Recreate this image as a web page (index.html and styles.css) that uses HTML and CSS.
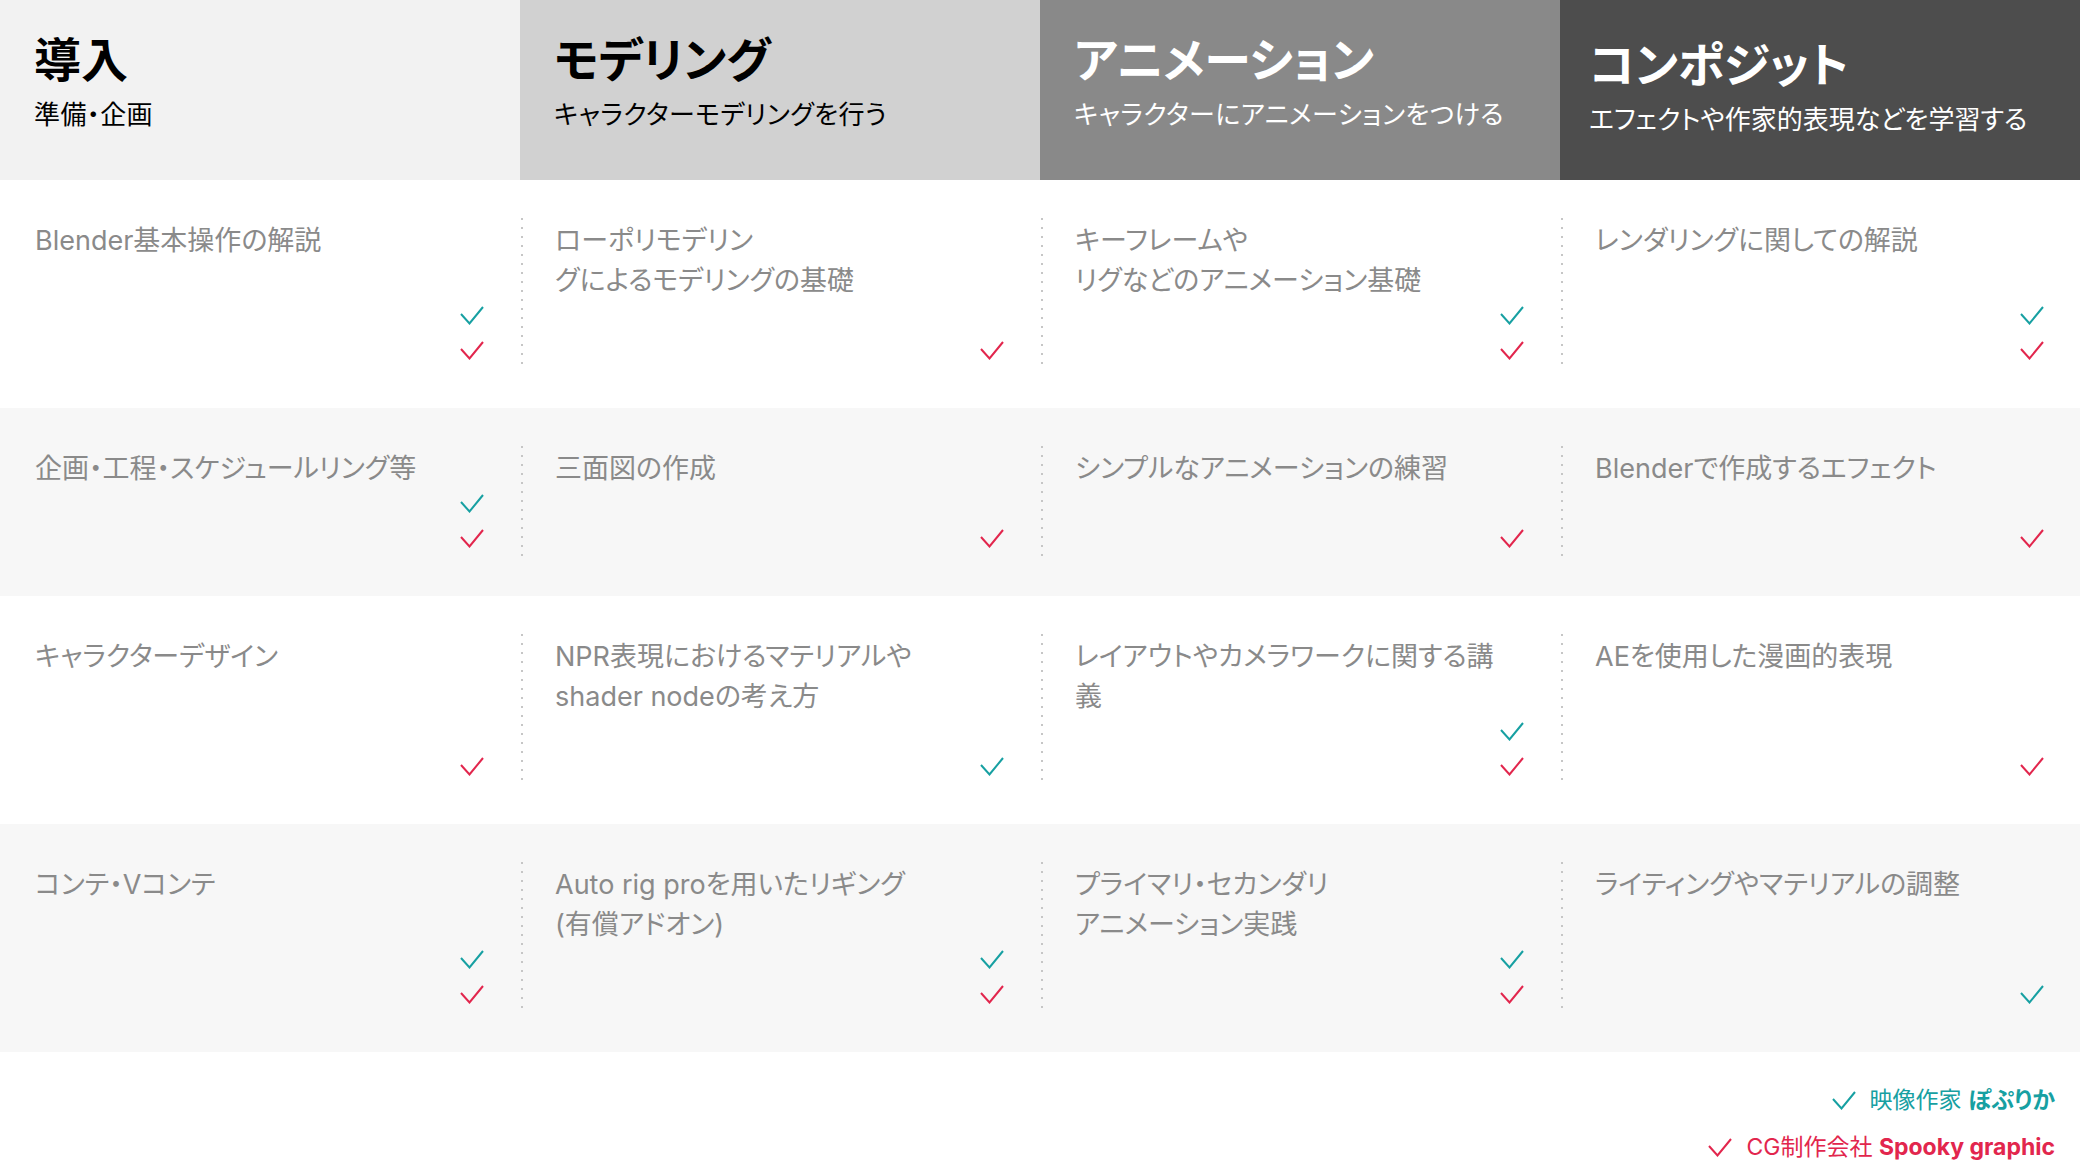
FILE: index.html
```html
<!DOCTYPE html>
<html lang="ja">
<head>
  <meta charset="UTF-8">
  <meta name="viewport" content="width=device-width, initial-scale=1.0">
  <title>カリキュラム</title>
  <link rel="stylesheet" href="styles.css">
</head>
<body>
  <svg width="0" height="0" class="defs">
    <symbol id="check" viewBox="0 0 24 19">
      <polyline points="1,8 9.5,17.5 23,1" fill="none" stroke="currentColor" stroke-width="2"/>
    </symbol>
  </svg>

  <section class="curriculum">
    <header class="heads">
      <div class="head head-1">
        <h2>導入</h2>
        <p>準備・企画</p>
      </div>
      <div class="head head-2">
        <h2>モデリング</h2>
        <p>キャラクターモデリングを行う</p>
      </div>
      <div class="head head-3">
        <h2>アニメーション</h2>
        <p>キャラクターにアニメーションをつける</p>
      </div>
      <div class="head head-4">
        <h2>コンポジット</h2>
        <p>エフェクトや作家的表現などを学習する</p>
      </div>
    </header>

    <div class="row">
      <div class="cell">
        <p class="topic">Blender基本操作の解説</p>
        <div class="marks"><svg class="mark teal"><use href="#check"/></svg><svg class="mark red"><use href="#check"/></svg></div>
      </div>
      <div class="cell">
        <p class="topic">ローポリモデリン<br>グによるモデリングの基礎</p>
        <div class="marks"><svg class="mark red"><use href="#check"/></svg></div>
      </div>
      <div class="cell">
        <p class="topic">キーフレームや<br>リグなどのアニメーション基礎</p>
        <div class="marks"><svg class="mark teal"><use href="#check"/></svg><svg class="mark red"><use href="#check"/></svg></div>
      </div>
      <div class="cell">
        <p class="topic">レンダリングに関しての解説</p>
        <div class="marks"><svg class="mark teal"><use href="#check"/></svg><svg class="mark red"><use href="#check"/></svg></div>
      </div>
    </div>

    <div class="row row-alt">
      <div class="cell">
        <p class="topic">企画・工程・スケジュールリング等</p>
        <div class="marks"><svg class="mark teal"><use href="#check"/></svg><svg class="mark red"><use href="#check"/></svg></div>
      </div>
      <div class="cell">
        <p class="topic">三面図の作成</p>
        <div class="marks"><svg class="mark red"><use href="#check"/></svg></div>
      </div>
      <div class="cell">
        <p class="topic">シンプルなアニメーションの練習</p>
        <div class="marks"><svg class="mark red"><use href="#check"/></svg></div>
      </div>
      <div class="cell">
        <p class="topic">Blenderで作成するエフェクト</p>
        <div class="marks"><svg class="mark red"><use href="#check"/></svg></div>
      </div>
    </div>

    <div class="row">
      <div class="cell">
        <p class="topic">キャラクターデザイン</p>
        <div class="marks"><svg class="mark red"><use href="#check"/></svg></div>
      </div>
      <div class="cell">
        <p class="topic">NPR表現におけるマテリアルや<br>shader nodeの考え方</p>
        <div class="marks"><svg class="mark teal"><use href="#check"/></svg></div>
      </div>
      <div class="cell">
        <p class="topic">レイアウトやカメラワークに関する講<br>義</p>
        <div class="marks"><svg class="mark teal"><use href="#check"/></svg><svg class="mark red"><use href="#check"/></svg></div>
      </div>
      <div class="cell">
        <p class="topic">AEを使用した漫画的表現</p>
        <div class="marks"><svg class="mark red"><use href="#check"/></svg></div>
      </div>
    </div>

    <div class="row row-alt">
      <div class="cell">
        <p class="topic">コンテ・Vコンテ</p>
        <div class="marks"><svg class="mark teal"><use href="#check"/></svg><svg class="mark red"><use href="#check"/></svg></div>
      </div>
      <div class="cell">
        <p class="topic">Auto rig proを用いたリギング<br>(有償アドオン)</p>
        <div class="marks"><svg class="mark teal"><use href="#check"/></svg><svg class="mark red"><use href="#check"/></svg></div>
      </div>
      <div class="cell">
        <p class="topic">プライマリ・セカンダリ<br>アニメーション実践</p>
        <div class="marks"><svg class="mark teal"><use href="#check"/></svg><svg class="mark red"><use href="#check"/></svg></div>
      </div>
      <div class="cell">
        <p class="topic">ライティングやマテリアルの調整</p>
        <div class="marks"><svg class="mark teal"><use href="#check"/></svg></div>
      </div>
    </div>
  </section>

  <footer class="legend">
    <p class="legend-item teal"><svg class="mark"><use href="#check"/></svg>映像作家 <b>ぽぷりか</b></p>
    <p class="legend-item red"><svg class="mark"><use href="#check"/></svg>CG制作会社 <b>Spooky graphic</b></p>
  </footer>
</body>
</html>
```

FILE: styles.css
```css
body {
  margin: 0;
  font-family: Inter, "Noto Sans CJK JP", sans-serif;
  font-feature-settings: "palt";
  background-color: #ffffff;
  color: #8a8a8a;
}
.defs {
  position: absolute;
}
.heads {
  display: grid;
  grid-template-columns: repeat(4, 1fr);
  height: 180px;
}
.head {
  padding: 32px 34px 0;
  box-sizing: border-box;
  white-space: nowrap;
}
.head h2 {
  margin: 0;
  font-size: 47px;
  line-height: 56px;
  font-weight: 700;
}
.head p {
  margin: 9px 0 0;
  font-size: 26px;
  line-height: 36px;
  letter-spacing: 0.4px;
}
.head-1 {
  background-color: #f2f2f2;
  color: #000000;
}
.head-2 {
  background-color: #d1d1d1;
  color: #000000;
}
.head-3 {
  background-color: #898989;
  color: #ffffff;
}
.head-4 {
  background-color: #4d4d4d;
  color: #ffffff;
  padding-top: 37px;
  padding-left: 29px;
}
.head-4 p {
  letter-spacing: 0;
}
.row {
  display: grid;
  grid-template-columns: repeat(4, 1fr);
  padding: 38px 0 40px;
}
.row-alt {
  background-color: #f7f7f7;
}
.cell {
  display: flex;
  flex-direction: column;
  justify-content: space-between;
  padding: 0 36px 0 35px;
  min-height: 110px;
}
.cell + .cell {
  background-image: linear-gradient(to bottom, #c6c6c6 2px, transparent 2px);
  background-size: 2px 9px;
  background-repeat: repeat-y;
  background-position: 1px 0;
}
.topic {
  margin: 0 0 -3px;
  padding-top: 3px;
  font-size: 27px;
  line-height: 40px;
}
.marks {
  display: flex;
  flex-direction: column;
  align-items: flex-end;
}
.mark {
  width: 24px;
  height: 19px;
  margin: 8px 0;
}
.teal {
  color: #17a0a2;
}
.red {
  color: #e2264d;
}
.legend {
  display: flex;
  flex-direction: column;
  align-items: flex-end;
  padding: 25px 25px 0 0;
}
.legend-item {
  margin: 0;
  display: flex;
  align-items: center;
  font-size: 23px;
  line-height: 47px;
  white-space: pre;
}
.legend-item .mark {
  margin: 0 14px 0 0;
}
.legend-item b {
  font-weight: 700;
}
```
